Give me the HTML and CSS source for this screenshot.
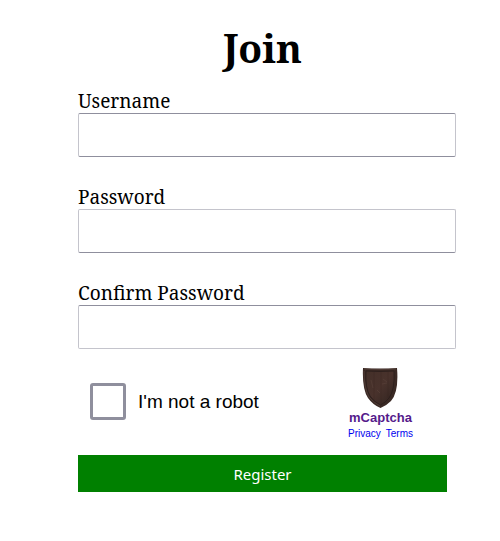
FILE: index.html
```html
<!DOCTYPE html>
<html lang="en">
<head>
<meta charset="utf-8">
<title>Join</title>
<link rel="stylesheet" href="styles.css">
</head>
<body>
<main class="page">
  <h1 class="title">Join</h1>
  <form class="form">
    <div class="field">
      <label for="username">Username</label>
      <input id="username" type="text">
    </div>
    <div class="field soft-top">
      <label for="password">Password</label>
      <input id="password" type="password">
    </div>
    <div class="field soft-bottom">
      <label for="confirm">Confirm Password</label>
      <input id="confirm" type="password">
    </div>
    <div class="captcha">
      <div class="choice">
        <input class="check" id="robot" type="checkbox">
        <label class="robot" for="robot">I'm not a robot</label>
      </div>
      <div class="brand">
        <svg class="shield" viewBox="0 0 36 42" aria-hidden="true">
          <defs>
            <linearGradient id="wood" x1="0" y1="0" x2="1" y2="1">
              <stop offset="0" stop-color="#443029"/>
              <stop offset=".5" stop-color="#49322c"/>
              <stop offset="1" stop-color="#30231f"/>
            </linearGradient>
          </defs>
          <path d="M1 1Q18 2 35 1Q37 25 29 34Q24 39 18.500 41Q11 38 6 31Q0 22 1 1Z" fill="#3a2924"/>
          <path d="M4 4Q18 5 32 4Q33 23 27 31Q23 36 18.500 38Q12 35 8 29Q3 21 4 4Z" fill="url(#wood)" stroke="#291d1a" stroke-width=".8"/>
          <path d="M2 2Q18 3 34 2M2 4Q2 21 7 30Q12 36 18 39" fill="none" stroke="#59443c" stroke-width=".7"/>
          <path d="M12 5v30M19 5v32M26 5v26" stroke="#38251f" stroke-width=".8" opacity=".35"/>
          <path d="M21 12l4 3M20 17l5-1M9 13l2 8M15 23l3 3" stroke="#6a5047" stroke-width=".8" opacity=".4"/>
        </svg>
        <a class="name" href="#mcaptcha">mCaptcha</a>
        <div class="links"><a href="#privacy">Privacy</a><a href="#terms">Terms</a></div>
      </div>
    </div>
    <button class="register" type="submit">Register</button>
  </form>
</main>
</body>
</html>
```
FILE: styles.css
```css
* {
  box-sizing: border-box;
}

body {
  margin: 0;
  background: #fff;
  color: #000;
  font-family: "Noto Serif", "Droid Serif", "Liberation Serif", serif;
}

.page {
  padding: 20px 53px 48px 78px;
}

.title {
  margin: 0 0 13px;
  font-size: 39px;
  line-height: 56px;
  text-align: center;
}

.field {
  display: flex;
  flex-direction: column;
  margin: 0 -9px 28px 0;
}

.field label {
  font-size: 19px;
  line-height: 24px;
}

.field input {
  width: 100%;
  height: 44px;
  padding: 8px;
  border: 1px solid #8f8f9d;
  border-left-color: #c4c4cc;
  border-right-color: #c4c4cc;
  border-radius: 2px;
  background: #fff;
  font-size: 19px;
}

.soft-top input {
  border-top-color: #c4c4cc;
}

.soft-bottom input {
  border-bottom-color: #c4c4cc;
}

.field.soft-bottom {
  margin-bottom: 18px;
}

.captcha {
  display: flex;
  align-items: center;
  justify-content: space-between;
  margin-bottom: 14px;
  padding: 0 34px 0 12px;
  font-family: "Liberation Sans", sans-serif;
}

.choice {
  display: flex;
  align-items: center;
  gap: 12px;
  padding-bottom: 5px;
}

.check {
  appearance: none;
  width: 36px;
  height: 37px;
  margin: 0;
  border: 3px solid #8f8f9d;
  border-radius: 3px;
  background: #fff;
}

.robot {
  font-size: 19px;
}

.brand {
  display: flex;
  flex-direction: column;
  align-items: center;
}

.shield {
  width: 36px;
  height: 42px;
}

.name {
  color: #551a8b;
  font-size: 13px;
  font-weight: bold;
  line-height: 18px;
  text-decoration: none;
}

.links {
  display: flex;
  gap: 5px;
  font-size: 10px;
  line-height: 14px;
}

.links a {
  color: #00e;
  text-decoration: none;
}

.register {
  display: block;
  width: 100%;
  height: 37px;
  padding: 0;
  border: 0;
  background: #008000;
  color: #fff;
  font-family: "Noto Sans", sans-serif;
  font-size: 15px;
}
```
